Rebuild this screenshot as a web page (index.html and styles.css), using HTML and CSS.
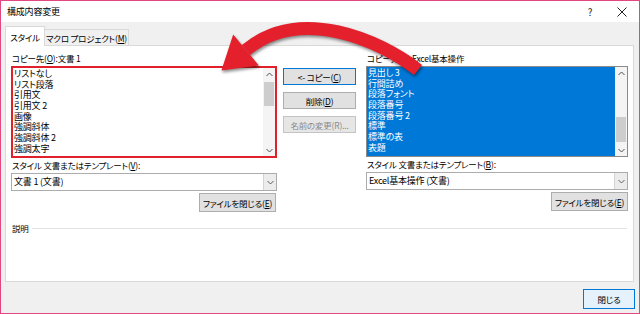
FILE: index.html
```html
<!DOCTYPE html>
<html lang="ja">
<head>
<meta charset="utf-8">
<title>構成内容変更</title>
<link rel="stylesheet" href="styles.css">
</head>
<body>
<div class="window">
  <div class="titlebar">
    <span class="title">構成内容変更</span>
    <span class="tb-btns">
      <span class="help">?</span>
      <span class="close"><svg width="10" height="10" viewBox="0 0 10 10"><path d="M0.5 0.5 L9.5 9.5 M9.5 0.5 L0.5 9.5" stroke="#222" stroke-width="1" fill="none"/></svg></span>
    </span>
  </div>
  <div class="tabs">
    <div class="tab active">スタイル</div>
    <div class="tab">マクロ プロジェクト(<u>M</u>)</div>
  </div>
  <div class="panel">
    <div class="cols">
      <div class="col col-left">
        <div class="label">コピー先(<u>O</u>):文書 1</div>
        <div class="list list-left">
          <div class="items">
            <div>リストなし</div>
            <div>リスト段落</div>
            <div>引用文</div>
            <div>引用文 2</div>
            <div>画像</div>
            <div>強調斜体</div>
            <div>強調斜体 2</div>
            <div>強調太字</div>
          </div>
          <div class="scroll">
            <span class="sarrow"><svg width="7" height="5" viewBox="0 0 7 5"><path d="M0.5 4 L3.5 1 L6.5 4" stroke="#505050" fill="none"/></svg></span>
            <span class="track"><span class="thumb thumb-left"></span></span>
            <span class="sarrow"><svg width="7" height="5" viewBox="0 0 7 5"><path d="M0.5 1 L3.5 4 L6.5 1" stroke="#505050" fill="none"/></svg></span>
          </div>
        </div>
        <div class="label label2">スタイル 文書またはテンプレート(<u>V</u>):</div>
        <div class="combo"><span class="ctext">文書 1 (文書)</span><span class="drop"><svg width="7" height="5" viewBox="0 0 7 5"><path d="M0.5 1 L3.5 4 L6.5 1" stroke="#606060" fill="none"/></svg></span></div>
        <div class="btnrow"><button class="btn fbtn">ファイルを閉じる(<u>E</u>)</button></div>
      </div>
      <div class="mid">
        <button class="btn default">&lt;- コピー(<u>C</u>)</button>
        <button class="btn">削除(<u>D</u>)</button>
        <button class="btn disabled">名前の変更(R)...</button>
      </div>
      <div class="col col-right">
        <div class="label">コピー元(<u>B</u>):Excel基本操作</div>
        <div class="list list-right">
          <div class="items selected">
            <div>見出し 3</div>
            <div>行間詰め</div>
            <div>段落フォント</div>
            <div>段落番号</div>
            <div>段落番号 2</div>
            <div>標準</div>
            <div>標準の表</div>
            <div>表題</div>
          </div>
          <div class="scroll">
            <span class="sarrow"><svg width="7" height="5" viewBox="0 0 7 5"><path d="M0.5 4 L3.5 1 L6.5 4" stroke="#505050" fill="none"/></svg></span>
            <span class="track"><span class="thumb thumb-right"></span></span>
            <span class="sarrow"><svg width="7" height="5" viewBox="0 0 7 5"><path d="M0.5 1 L3.5 4 L6.5 1" stroke="#505050" fill="none"/></svg></span>
          </div>
        </div>
        <div class="label label2">スタイル 文書またはテンプレート(<u>B</u>):</div>
        <div class="combo"><span class="ctext">Excel基本操作 (文書)</span><span class="drop"><svg width="7" height="5" viewBox="0 0 7 5"><path d="M0.5 1 L3.5 4 L6.5 1" stroke="#606060" fill="none"/></svg></span></div>
        <div class="btnrow"><button class="btn fbtn">ファイルを閉じる(<u>E</u>)</button></div>
      </div>
    </div>
    <div class="desc"><span>説明</span><span class="rule"></span></div>
  </div>
  <div class="footer"><button class="btn closebtn">閉じる</button></div>
  <svg class="arrow" width="640" height="314" viewBox="0 0 640 314">
    <path d="M418 70 C380 40, 300 5, 246 50" stroke="#e3202b" stroke-width="13" fill="none"/>
    <path d="M221.4 70.5 L258.8 65.4 L233.2 34.6 Z" fill="#e3202b"/>
  </svg>
</div>
</body>
</html>
```
FILE: styles.css
```css
* { box-sizing: border-box; }
html, body { margin: 0; padding: 0; }
body {
  width: 640px;
  height: 314px;
  overflow: hidden;
  font-family: "Noto Sans CJK JP", "Noto Sans", sans-serif;
  font-size: 8.5px;
  letter-spacing: -0.2px;
  font-feature-settings: "palt";
  color: #000;
  background: #fff;
}
u { text-decoration: underline; text-underline-offset: 1px; }
.window {
  position: relative;
  width: 640px;
  height: 314px;
  border: 1px solid #e2477f;
  background: #f0f0f0;
  display: flex;
  flex-direction: column;
}
.titlebar {
  height: 21px;
  flex: none;
  background: #fff;
  display: flex;
  align-items: center;
  justify-content: space-between;
  padding-left: 6px;
}
.title { font-size: 9px; line-height: 12px; }
.tb-btns { display: flex; align-items: center; }
.help { width: 30px; text-align: center; font-size: 10px; line-height: 12px; color: #222; }
.close { width: 34px; display: flex; justify-content: center; }
.tabs {
  height: 23px;
  flex: none;
  display: flex;
  align-items: flex-end;
  padding-left: 4px;
}
.tab {
  height: 16px;
  width: 85px;
  margin-left: -1px;
  border: 1px solid #d9d9d9;
  border-bottom: none;
  background: #f0f0f0;
  display: flex;
  align-items: center;
  justify-content: center;
  line-height: 12px;
  padding-top: 1px;
  white-space: nowrap;
}
.tab.active {
  height: 20px;
  width: 40px;
  margin-left: 0;
  margin-bottom: -1px;
  background: #fff;
  position: relative;
  z-index: 1;
  padding-top: 0;
}
.panel {
  height: 237px;
  flex: none;
  margin: 0 5px 0 4px;
  background: #fff;
  border: 1px solid #d9d9d9;
  padding: 6px 0 0 5px;
}
.cols { display: flex; align-items: flex-start; }
.col { display: flex; flex-direction: column; }
.col-left { width: 266px; }
.col-right { width: 262px; }
.mid {
  width: 73px;
  margin: 16px 10px 0 6px;
  display: flex;
  flex-direction: column;
  gap: 7px;
}
.label { line-height: 12px; height: 12px; padding-left: 1px; white-space: nowrap; }
.list {
  margin-top: 2px;
  height: 92px;
  display: flex;
  background: #fff;
}
.list-left { border: 2px solid #e0202a; }
.list-right { border: 1px solid #8a8a8a; height: 91px; }
.items {
  flex: 1;
  padding: 1px 0 0 1px;
  line-height: 10.67px;
  font-size: 9px;
  white-space: nowrap;
  overflow: hidden;
}
.items > div { height: 10.67px; }
.items.selected { background: #0078d7; color: #fff; }
.scroll {
  width: 12px;
  flex: none;
  display: flex;
  flex-direction: column;
  background: #f4f4f4;
}
.sarrow {
  height: 12px;
  flex: none;
  display: flex;
  align-items: center;
  justify-content: center;
}
.track { flex: 1; position: relative; display: flex; flex-direction: column; }
.thumb { display: block; background: #cdcdcd; margin: 0 1px; }
.thumb-left { margin-top: 2px; height: 24px; }
.thumb-right { margin-top: 38px; height: 25px; }
.label2 { margin-top: 1px; }
.combo {
  margin-top: 2px;
  height: 18px;
  border: 1px solid #acacac;
  display: flex;
  align-items: center;
  background: #fff;
}
.ctext { flex: 1; padding-left: 2px; line-height: 12px; font-size: 9px; }
.drop {
  width: 13px;
  height: 100%;
  border-left: 1px solid #d4d4d4;
  background: #ececec;
  display: flex;
  align-items: center;
  justify-content: center;
}
.btnrow { margin-top: 2px; display: flex; justify-content: flex-end; }
.btn {
  font-family: inherit;
  font-size: 8.5px;
  letter-spacing: -0.2px;
  font-feature-settings: "palt";
  line-height: 12px;
  color: #000;
  background: #e1e1e1;
  border: 1px solid #adadad;
  padding: 0;
  height: 17px;
  margin: 0;
  white-space: nowrap;
}
.fbtn { width: 77px; height: 19px; margin-right: 1px; }
.col-right .fbtn { margin-right: 0; }
.default { border-color: #0078d7; }
.disabled { color: #8a8a8a; background: #e6e6e6; border-color: #c4c4c4; }
.desc {
  margin-top: 10px;
  height: 12px;
  display: flex;
  align-items: center;
  padding-left: 1px;
  line-height: 12px;
}
.rule { flex: none; width: 595px; margin-left: 3px; border-top: 1px solid #e3e3e3; }
.footer {
  flex: 1;
  display: flex;
  justify-content: flex-end;
  align-items: flex-start;
  padding: 7px 4px 0 0;
}
.closebtn {
  width: 52px;
  height: 20px;
  background: #e5f1fb;
  border-color: #0078d7;
}
.arrow {
  position: absolute;
  left: -1px;
  top: -1px;
  pointer-events: none;
  filter: drop-shadow(1px 2px 1.5px rgba(0, 0, 0, 0.45));
}
```
